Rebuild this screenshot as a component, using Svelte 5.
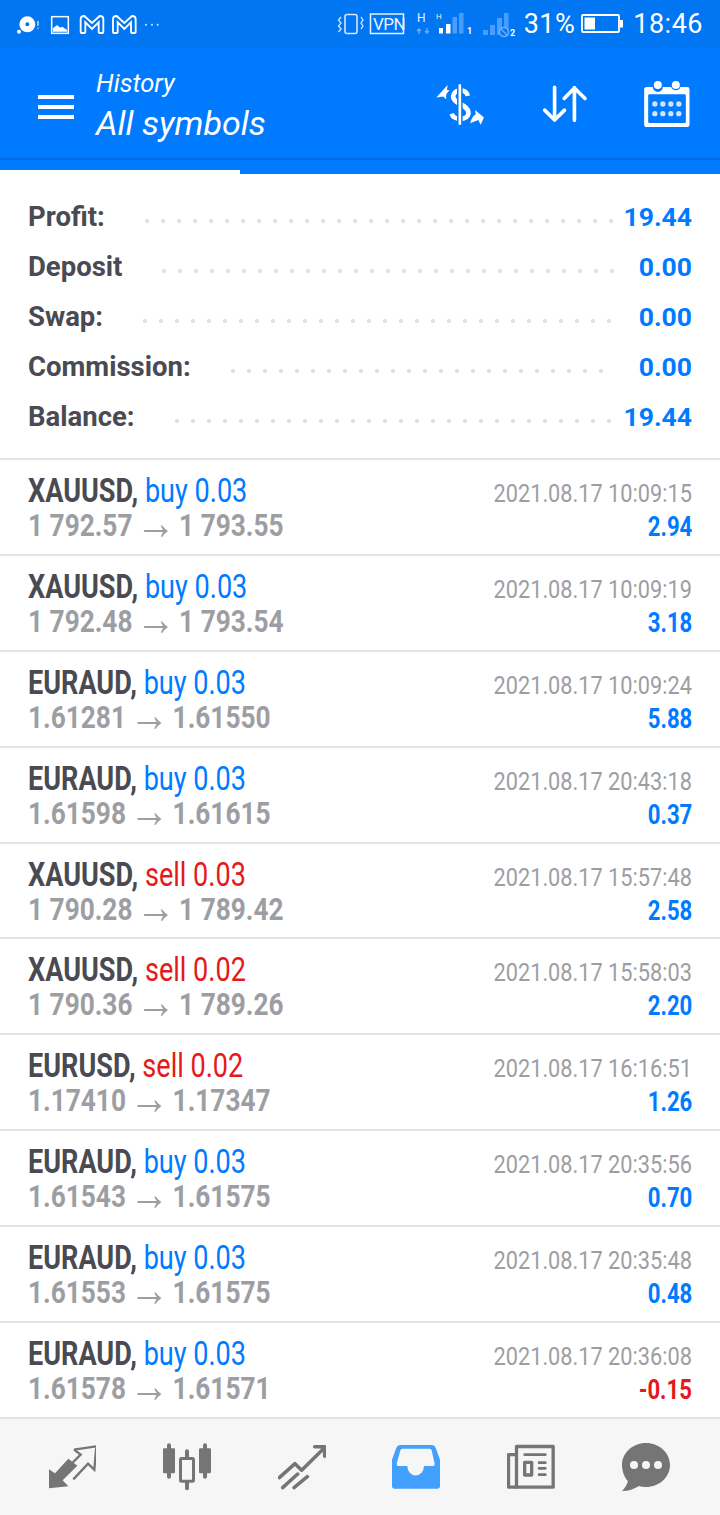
<script>
  const summary = [
    { label: "Profit:", value: "19.44" },
    { label: "Deposit", value: "0.00" },
    { label: "Swap:", value: "0.00" },
    { label: "Commission:", value: "0.00" },
    { label: "Balance:", value: "19.44" },
  ];

  const deals = [
    ["XAUUSD", "buy", "0.03", "1 792.57", "1 793.55", "2021.08.17 10:09:15", "2.94"],
    ["XAUUSD", "buy", "0.03", "1 792.48", "1 793.54", "2021.08.17 10:09:19", "3.18"],
    ["EURAUD", "buy", "0.03", "1.61281", "1.61550", "2021.08.17 10:09:24", "5.88"],
    ["EURAUD", "buy", "0.03", "1.61598", "1.61615", "2021.08.17 20:43:18", "0.37"],
    ["XAUUSD", "sell", "0.03", "1 790.28", "1 789.42", "2021.08.17 15:57:48", "2.58"],
    ["XAUUSD", "sell", "0.02", "1 790.36", "1 789.26", "2021.08.17 15:58:03", "2.20"],
    ["EURUSD", "sell", "0.02", "1.17410", "1.17347", "2021.08.17 16:16:51", "1.26"],
    ["EURAUD", "buy", "0.03", "1.61543", "1.61575", "2021.08.17 20:35:56", "0.70"],
    ["EURAUD", "buy", "0.03", "1.61553", "1.61575", "2021.08.17 20:35:48", "0.48"],
    ["EURAUD", "buy", "0.03", "1.61578", "1.61571", "2021.08.17 20:36:08", "-0.15"],
  ];
</script>

<div class="screen">
  <div class="status">
    <svg class="left-icons" viewBox="48 36 432 72" width="144" height="24" aria-hidden="true">
      <path fill="#fff" fill-rule="evenodd" d="M58 70a24 24 0 1 0 48 0a24 24 0 1 0-48 0zM76 70a6 6 0 1 1 12 0a6 6 0 1 1-12 0z" />
      <circle cx="57" cy="92" r="6" fill="#fff" />
      <path d="M114 60v14M114 80v3" stroke="#fff" stroke-width="3.5" fill="none" />
      <rect x="155" y="47" width="50" height="50" fill="none" stroke="#fff" stroke-width="4.500" />
      <path fill="#fff" d="M159 92v-10l12-10 10 8 6-3 14 10v5z" />
      <path d="M242 94V54q0-9 11-9l23 21 23-21q11 0 11 9v40q0 2-3 2h-8q-3 0-3-2V64l-20 20-20-20v30q0 2-3 2h-8q-3 0-3-2z" fill="none" stroke="#fff" stroke-width="5.500" />
      <path d="M339 94V54q0-9 11-9l23 21 23-21q11 0 11 9v40q0 2-3 2h-8q-3 0-3-2V64l-20 20-20-20v30q0 2-3 2h-8q-3 0-3-2z" fill="none" stroke="#fff" stroke-width="5.500" />
      <g fill="#d5e7ff">
        <circle cx="438" cy="71" r="3" />
        <circle cx="456" cy="71" r="3" />
        <circle cx="473" cy="71" r="3" />
      </g>
    </svg>
    <div class="status-right">
      <svg viewBox="335 8 185 32" width="185" height="32" aria-hidden="true">
        <rect x="344" y="14.5" width="12" height="19" rx="2" fill="none" stroke="#d5e7ff" stroke-width="1.6" />
        <path d="M340 17l-2.500 3 2.500 3-2.500 3 2.500 3 -2.500 3" fill="none" stroke="#d5e7ff" stroke-width="1.300" />
        <path d="M360 17l2 3-2 3 2 3-2 3" fill="none" stroke="#d5e7ff" stroke-width="1.300" />
        <rect x="369.500" y="14" width="33" height="19.500" fill="none" stroke="#e6f1ff" stroke-width="1.500" />
        <text x="372" y="30" class="vpn">VPN</text>
        <text x="416" y="22" class="net">H</text>
        <text x="435" y="19" class="net small">H</text>
        <path d="M418 34v-5m-2 2 2-2 2 2M426 28v5m-2-2 2 2 2-2" stroke="#6fb0ff" stroke-width="1.300" fill="none" />
        <rect x="438" y="28" width="4" height="5.500" fill="#fff" />
        <rect x="445" y="24" width="4.500" height="9.500" fill="#fff" />
        <g fill="#4a9dff">
          <rect x="451.500" y="17" width="4.500" height="16.500" />
          <rect x="458" y="13" width="4.500" height="20.500" />
          <rect x="482" y="30" width="5" height="5" />
          <rect x="489" y="25" width="5" height="10" />
          <rect x="496" y="18" width="5" height="17" />
          <rect x="503" y="13" width="4.500" height="22" />
        </g>
        <circle cx="503" cy="32" r="4.500" fill="#007af0" stroke="#6fb0ff" stroke-width="1.500" />
        <path d="M500 29l6 6" stroke="#6fb0ff" stroke-width="1.300" />
        <text x="466" y="34" class="sim">1</text>
        <text x="509" y="36" class="sim">2</text>
      </svg>
      <span class="pct">31%</span>
      <svg class="battery" viewBox="0 0 43 20" width="43" height="20" aria-hidden="true">
        <rect x="1" y="1" width="37" height="17" rx="1" fill="none" stroke="#fff" stroke-width="1.800" />
        <rect x="3.500" y="3.500" width="10.500" height="12" fill="#fff" />
        <rect x="39" y="6" width="3" height="7.500" fill="#fff" />
      </svg>
      <span class="time">18:46</span>
    </div>
  </div>

  <header class="appbar">
    <div class="bar-main">
      <div class="burger" aria-hidden="true"><i></i><i></i><i></i></div>
      <div class="titles">
        <div class="sub">History</div>
        <div class="title">All symbols</div>
      </div>
      <div class="actions">
        <svg viewBox="228 250 146 124" width="49" height="41" aria-hidden="true">
          <path d="M323 286c-3-22-41-23-44 0-3 24 45 25 46 50 1 25-44 26-51 4" fill="none" stroke="#fff" stroke-width="14" />
          <path d="M299 252v120" stroke="#007aff" stroke-width="17" />
          <path d="M299 254v116" stroke="#fff" stroke-width="8" stroke-linecap="round" />
          <path fill="#fff" d="M228 291l34-38-2 15 8 1-6 7q-6 4-4 20l-10-8z" />
          <path fill="#fff" d="M372 351l-27-22 2 13q-11 4-17 27 14-6 25-10l7 14z" />
        </svg>
        <svg viewBox="547 255 133 115" width="46" height="38" aria-hidden="true">
          <path d="M582 262v98M552 331l30 30 30-30M642 362V263M611 296l31-32 32 32" fill="none" stroke="#fff" stroke-width="11" stroke-linecap="round" stroke-linejoin="round" />
        </svg>
        <svg viewBox="853 240 137 138" width="46" height="46" aria-hidden="true">
          <path fill="#fff" d="M861 258h18a15 15 0 0 0 30 0h25a15 15 0 0 0 28 0h20q7 0 7 7v106q0 7-7 7H861q-8 0-8-7V265q0-7 8-7z" />
          <circle cx="894" cy="252" r="12" fill="#fff" />
          <circle cx="948" cy="252" r="12" fill="#fff" />
          <rect x="865" y="280" width="113" height="86" rx="4" fill="#007aff" />
          <g fill="#cfe4ff">
            <circle cx="885" cy="309" r="8" /><circle cx="909" cy="309" r="8" /><circle cx="933" cy="309" r="8" /><circle cx="957" cy="309" r="8" />
            <circle cx="885" cy="338" r="8" /><circle cx="909" cy="338" r="8" /><circle cx="933" cy="338" r="8" /><circle cx="957" cy="338" r="8" />
          </g>
        </svg>
      </div>
    </div>
    <div class="tabs"><span class="tab-on"></span></div>
  </header>

  <section class="summary">
    {#each summary as row}
      <div class="sum-row">
        <span class="sum-label">{row.label}</span>
        <span class="dots"></span>
        <span class="sum-value">{row.value}</span>
      </div>
    {/each}
  </section>

  <section class="deals">
    {#each deals as [symbol, side, lots, open, close, date, profit]}
      <article class="deal">
        <div class="deal-left">
          <div class="deal-title cond">
            <b>{symbol},</b> <span class={side}>{side} {lots}</span>
          </div>
          <div class="deal-price cond">{open} <span class="arrow">→</span> {close}</div>
        </div>
        <div class="deal-right">
          <div class="deal-date cond-r">{date}</div>
          <div class="deal-profit cond-r" class:loss={profit.startsWith("-")}>{profit}</div>
        </div>
      </article>
    {/each}
  </section>

  <nav class="nav">
    <svg viewBox="144 96 144 144" width="48" height="48" aria-hidden="true">
      <path fill="#757575" d="M147 175v57l58-6-17-18 44-44-27-21-40 44z" />
      <path d="M222 116l67-10-6 70-19-18-44 47M222 116l20 15-24 24" fill="none" stroke="#757575" stroke-width="7" />
    </svg>
    <svg viewBox="489 96 144 144" width="48" height="48" aria-hidden="true">
      <g fill="#757575">
        <rect x="489" y="112" width="36" height="75" rx="4" />
        <rect x="597" y="112" width="36" height="75" rx="4" />
        <rect x="501" y="97" width="12" height="106" rx="6" />
        <rect x="609" y="97" width="12" height="106" rx="6" />
        <rect x="555" y="115" width="12" height="123" rx="6" />
      </g>
      <rect x="541.500" y="142.500" width="39" height="68" rx="3" fill="#f6f6f6" stroke="#757575" stroke-width="9" />
    </svg>
    <svg viewBox="834 96 144 144" width="48" height="48" aria-hidden="true">
      <path d="M838 200l47-42 20 20 67-66M944 107h30v29M848 230l45-41M882 230l40-33" fill="none" stroke="#757575" stroke-width="10.500" stroke-linecap="round" stroke-linejoin="round" />
    </svg>
    <svg viewBox="99 96 144 144" width="48" height="48" aria-hidden="true">
      <path fill="#42a0ff" d="M122 102h98q6 0 10 8l13 36v80q0 7-7 7H106q-7 0-7-7v-80l13-36q4-8 10-8z" />
      <path fill="#f6f6f6" d="M130 113h82q5 0 6 5l9 40q1 7-5 7h-27a24 27 0 0 1-50 0h-27q-6 0-5-7l11-40q1-5 6-5z" />
    </svg>
    <svg viewBox="444 96 144 144" width="48" height="48" aria-hidden="true">
      <g fill="none" stroke="#757575" stroke-width="10" stroke-linejoin="round" stroke-linecap="round">
        <rect x="472.500" y="106.500" width="110" height="122" />
        <path d="M468 131h-19.500v97.500H472" />
        <path d="M497 131h62M540 155h19M540 172h19M540 191h19" stroke-width="8" />
        <rect x="497" y="154" width="21" height="38" />
      </g>
    </svg>
    <svg viewBox="786 96 144 144" width="48" height="48" aria-hidden="true">
      <path fill="#757575" d="M858 96c40 0 72 30 72 66s-32 66-72 66c-8 0-14-1-21-3-14 9-32 15-51 15 8-7 14-17 18-29-11-12-18-31-18-49 0-36 32-66 72-66z" />
      <g fill="#f6f6f6">
        <circle cx="822" cy="162" r="12" />
        <circle cx="858" cy="162" r="12" />
        <circle cx="894" cy="162" r="12" />
      </g>
    </svg>
  </nav>
</div>

<style>
  :global(body) {
    margin: 0;
    background: #fff;
  }

  .screen {
    width: 720px;
    height: 1515px;
    overflow: hidden;
    display: flex;
    flex-direction: column;
    font-family: Roboto, "Liberation Sans", sans-serif;
    color: #4a4a52;
  }

  .status {
    flex: 0 0 48px;
    display: flex;
    align-items: center;
    justify-content: space-between;
    padding: 2px 17px 0 16px;
    box-sizing: border-box;
    background: #0076f2;
    color: #fff;
  }

  .left-icons {
    display: block;
  }

  .status-right {
    display: flex;
    align-items: center;
    margin-top: -2px;
  }

  .status-right svg {
    display: block;
  }

  .vpn {
    font-size: 17px;
    fill: #e6f1ff;
    letter-spacing: -0.5px;
  }

  .net {
    font-size: 12px;
    fill: #e6f1ff;
  }

  .net.small {
    font-size: 8px;
  }

  .sim {
    font-size: 9px;
    font-weight: 700;
    fill: #fff;
  }

  .pct,
  .time {
    font-size: 27px;
    letter-spacing: 0.5px;
    line-height: 46px;
  }

  .pct {
    margin-left: 3px;
  }

  .battery {
    margin: 0 9px 0 6px;
  }

  .appbar {
    flex: 0 0 126px;
    display: flex;
    flex-direction: column;
    background: #007aff;
    color: #fff;
  }

  .bar-main {
    flex: 0 0 110px;
    display: flex;
    align-items: center;
    border-bottom: 2px solid #0069dc;
    padding-left: 38px;
  }

  .burger {
    width: 36px;
    display: grid;
    gap: 6px;
    margin-top: 8px;
  }

  .burger i {
    display: block;
    height: 4px;
    background: #fff;
  }

  .titles {
    margin-left: 22px;
    font-style: italic;
    margin-top: 10px;
  }

  .sub {
    font-size: 25.5px;
    line-height: 30px;
  }

  .title {
    font-size: 34px;
    line-height: 50px;
  }

  .actions {
    margin-left: auto;
    display: flex;
    align-items: center;
    gap: 56.5px;
    padding-right: 30px;
    margin-top: 2px;
  }

  .actions svg {
    display: block;
  }

  .tabs {
    flex: 1;
    position: relative;
  }

  .tab-on {
    position: absolute;
    left: 0;
    bottom: 0;
    width: 240px;
    height: 4px;
    background: #fff;
  }

  .summary {
    flex: 0 0 286px;
    box-sizing: border-box;
    padding: 17px 28px 0;
    border-bottom: 2px solid #e4e4e6;
  }

  .sum-row {
    display: flex;
    height: 50px;
    align-items: center;
  }

  .sum-label {
    font-size: 27.5px;
    font-weight: 700;
    color: #4a4a52;
  }

  .dots {
    flex: 1;
    height: 50px;
    margin-left: 34px;
    background: radial-gradient(circle at 50% 50%, #e2e2e4 1.8px, transparent 2.6px) 0 5px / 16px 50px repeat-x;
  }

  .sum-value {
    width: 78px;
    text-align: right;
    font-size: 26.5px;
    font-weight: 700;
    color: #007aff;
  }

  .deals {
    flex: 0 0 959px;
  }

  .deal {
    height: 95.9px;
    box-sizing: border-box;
    border-bottom: 2px solid #e4e4e6;
    display: flex;
    justify-content: space-between;
    padding: 14px 28px 0;
  }

  .deal-left {
    min-width: 0;
  }

  .cond {
    width: max-content;
    transform: scaleX(0.82);
    transform-origin: left center;
  }

  .cond-r {
    width: max-content;
    margin-left: auto;
    transform: scaleX(0.82);
    transform-origin: right center;
  }

  .deal-title {
    font-size: 33px;
    line-height: 34px;
  }

  .deal-title b {
    font-weight: 700;
    color: #4a4a52;
  }

  .buy {
    color: #007aff;
  }

  .sell {
    color: #e41a1a;
  }

  .deal-price {
    font-size: 32px;
    line-height: 34px;
    font-weight: 700;
    color: #9d9ea3;
  }

  .arrow {
    font-family: "Liberation Sans", sans-serif;
    font-weight: 400;
    font-size: 48px;
    line-height: 0;
    margin: 0 -3.5px;
    vertical-align: -3px;
  }

  .deal-date {
    font-size: 26.5px;
    line-height: 36px;
    color: #9d9ea3;
    margin-top: 1px;
  }

  .deal-profit {
    font-size: 27px;
    line-height: 32px;
    font-weight: 700;
    color: #007aff;
  }

  .deal-profit.loss {
    color: #e41a1a;
  }

  .nav {
    flex: 1;
    display: flex;
    align-items: center;
    justify-content: space-between;
    padding: 0 50px 0 48px;
    background: #f6f6f6;
  }

  .nav svg {
    display: block;
  }
</style>
